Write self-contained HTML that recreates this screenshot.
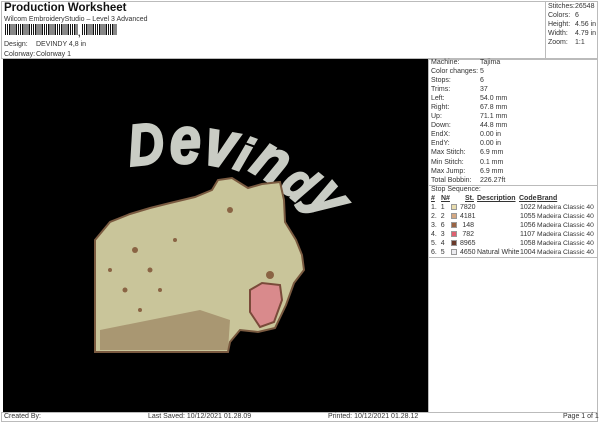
<!DOCTYPE html>
<html><head><meta charset="utf-8"><style>
*{margin:0;padding:0;box-sizing:border-box}
body{width:600px;height:424px;background:#fff;position:relative;overflow:hidden;font-family:"Liberation Sans",sans-serif;color:#333;font-size:7px}
.a{position:absolute;white-space:nowrap;line-height:9px}
.b{position:absolute;border:1px solid #bbb}
.sw{display:inline-block;width:6px;height:6px;vertical-align:-1px;border:1px solid #999}
u{text-decoration:underline}
</style></head><body>
<div class="b" style="left:1px;top:1px;width:597px;height:58px"></div>
<div class="b" style="left:545px;top:1px;width:53px;height:58px"></div>
<div class="a" style="left:4px;top:2px;font-size:11.5px;font-weight:bold;line-height:13px;color:#111">Production Worksheet</div>
<div class="a" style="left:4px;top:15px">Wilcom EmbroideryStudio – Level 3 Advanced</div>
<div style="position:absolute;left:5px;top:24px;width:73px;height:11px;background:repeating-linear-gradient(90deg,#111 0 1px,#fff 1px 2px,#111 2px 3px,#fff 3px 4px,#111 4px 5.5px,#fff 5.5px 6.5px)"></div>
<div class="a" style="left:78px;top:29px;font-weight:bold;font-size:9px">,</div>
<div style="position:absolute;left:82px;top:24px;width:35px;height:11px;background:repeating-linear-gradient(90deg,#111 0 1px,#fff 1px 2px,#111 2px 3px,#fff 3px 4px,#111 4px 5.5px,#fff 5.5px 6.5px)"></div>
<div class="a" style="left:4px;top:40px">Design:</div><div class="a" style="left:36px;top:40px">DEVINDY 4,8 in</div>
<div class="a" style="left:4px;top:50px">Colorway:</div><div class="a" style="left:36px;top:50px">Colorway 1</div>
<div class="a" style="left:548px;top:2px">Stitches:</div><div class="a" style="left:575px;top:2px">26548</div>
<div class="a" style="left:548px;top:11px">Colors:</div><div class="a" style="left:575px;top:11px">6</div>
<div class="a" style="left:548px;top:20px">Height:</div><div class="a" style="left:575px;top:20px">4.56 in</div>
<div class="a" style="left:548px;top:29px">Width:</div><div class="a" style="left:575px;top:29px">4.79 in</div>
<div class="a" style="left:548px;top:38px">Zoom:</div><div class="a" style="left:575px;top:38px">1:1</div>

<div style="position:absolute;left:3px;top:59px;width:425px;height:353px;background:#000"></div>
<svg style="position:absolute;left:3px;top:59px" width="425" height="353" viewBox="3 59 425 353">
<g font-family="Liberation Sans,sans-serif" font-weight="bold" font-style="italic" fill="#c9ccc4" stroke="#c9ccc4" stroke-width="2.5" text-anchor="middle">
<text font-size="58" transform="translate(148,164) rotate(-6) scale(0.85,1)">D</text>
<text font-size="66" transform="translate(186,163) rotate(-2) scale(0.85,1)">e</text>
<text font-size="66" transform="translate(217,166) rotate(10) scale(0.85,1)">v</text>
<text font-size="48" transform="translate(238,170) rotate(20) scale(0.9,1)">i</text>
<text font-size="62" transform="translate(262,178) rotate(30) scale(0.85,1)">n</text>
<text font-size="50" transform="translate(289,196) rotate(40) scale(0.85,1)">d</text>
<text font-size="60" transform="translate(315,210) rotate(50) scale(0.85,1)">y</text>
</g>
<polygon points="95,240 110,222 130,214 150,208 170,203 195,197 212,190 218,180 232,178 248,188 262,184 280,182 284,200 285,222 296,240 302,255 304,270 294,283 286,305 275,328 258,332 240,330 230,342 228,352 95,352" fill="#c9c59a" stroke="#7a5a40" stroke-width="2"/>
<polygon points="250,290 262,283 280,285 282,300 274,322 260,327 250,312" fill="#d98a8c" stroke="#7a4a3a" stroke-width="2"/>
<polygon points="100,330 150,320 200,310 230,320 228,350 100,350" fill="#8a6a4a" opacity=".5"/>
<g fill="#8a6444"><circle cx="135" cy="250" r="3"/><circle cx="150" cy="270" r="2.5"/><circle cx="125" cy="290" r="2.5"/><circle cx="160" cy="290" r="2"/><circle cx="140" cy="310" r="2"/><circle cx="175" cy="240" r="2"/><circle cx="110" cy="270" r="2"/><circle cx="230" cy="210" r="3"/><circle cx="270" cy="275" r="4"/></g>
</svg>

<div class="b" style="left:428px;top:59px;width:170px;height:354px"></div>
<div style="position:absolute;left:428px;top:185px;width:170px;border-top:1px solid #bbb"></div>
<div style="position:absolute;left:428px;top:257px;width:170px;border-top:1px solid #bbb"></div>
<div class="a" style="left:431px;top:58px;line-height:9.05px">Machine:<br>Color changes:<br>Stops:<br>Trims:<br>Left:<br>Right:<br>Up:<br>Down:<br>EndX:<br>EndY:<br>Max Stitch:<br>Min Stitch:<br>Max Jump:<br>Total Bobbin:</div>
<div class="a" style="left:480px;top:58px;line-height:9.05px">Tajima<br>5<br>6<br>37<br>54.0 mm<br>67.8 mm<br>71.1 mm<br>44.8 mm<br>0.00 in<br>0.00 in<br>6.9 mm<br>0.1 mm<br>6.9 mm<br>226.27ft</div>
<div class="a" style="left:431px;top:185px">Stop Sequence:</div>
<div class="a" style="left:431px;top:194px;font-weight:bold"><u>#</u></div>
<div class="a" style="left:441px;top:194px;font-weight:bold"><u>N#</u></div>
<div class="a" style="left:465px;top:194px;font-weight:bold"><u>St.</u></div>
<div class="a" style="left:477px;top:194px;font-weight:bold"><u>Description</u></div>
<div class="a" style="left:519px;top:194px;font-weight:bold"><u>Code</u></div>
<div class="a" style="left:537px;top:194px;font-weight:bold"><u>Brand</u></div>
<div class="a" style="left:431px;top:203px;line-height:9px">1.&nbsp; 1<br>2.&nbsp; 2<br>3.&nbsp; 6<br>4.&nbsp; 3<br>5.&nbsp; 4<br>6.&nbsp; 5</div>
<div class="a" style="left:451px;top:203px;line-height:9px"><span class="sw" style="background:#e8dcae"></span><br><span class="sw" style="background:#d4a882"></span><br><span class="sw" style="background:#9a6444"></span><br><span class="sw" style="background:#e06070"></span><br><span class="sw" style="background:#6a3a2a"></span><br><span class="sw" style="background:#ececf0"></span></div>
<div class="a" style="left:460px;top:203px;line-height:9px;text-align:right;width:14px;display:block">7820<br>4181<br>148<br>782<br>8965<br>4650</div>
<div class="a" style="left:477px;top:248px">Natural White</div>
<div class="a" style="left:520px;top:203px;line-height:9px">1022<br>1055<br>1056<br>1107<br>1058<br>1004</div>
<div class="a" style="left:537px;top:203px;line-height:9px;font-size:6.7px">Madeira Classic 40<br>Madeira Classic 40<br>Madeira Classic 40<br>Madeira Classic 40<br>Madeira Classic 40<br>Madeira Classic 40</div>

<div class="b" style="left:1px;top:412px;width:597px;height:10px"></div>
<div class="a" style="left:4px;top:412px">Created By:</div>
<div class="a" style="left:148px;top:412px">Last Saved: 10/12/2021 01.28.09</div>
<div class="a" style="left:328px;top:412px">Printed: 10/12/2021 01.28.12</div>
<div class="a" style="left:563px;top:412px">Page 1 of 1</div>
</body></html>
